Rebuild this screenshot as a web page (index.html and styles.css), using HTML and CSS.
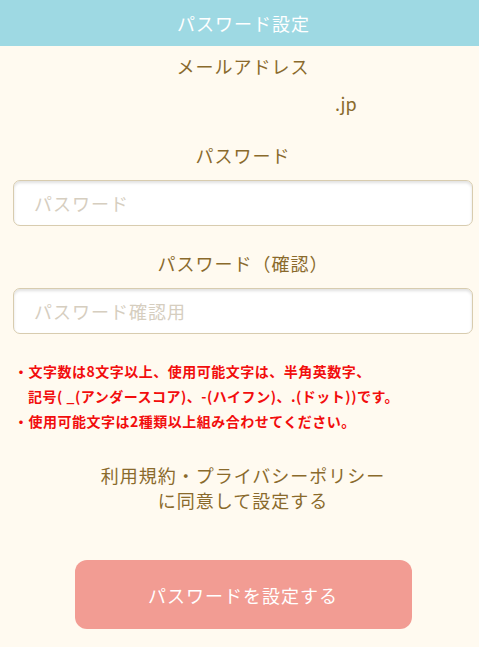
FILE: index.html
```html
<!DOCTYPE html>
<html lang="ja">

<head>
  <meta charset="UTF-8" />
  <title>パスワード設定</title>
  <link rel="stylesheet" href="styles.css">
</head>

<body>
  <div class="page">
    <div class="top-bar">
      <h1>パスワード設定</h1>
    </div>

    <div class="container">
      <p class="label label-mail">メールアドレス</p>
      <p class="mail">.jp</p>

      <p class="label label-pass">パスワード</p>
      <input type="password" class="field" placeholder="パスワード" />

      <p class="label label-confirm">パスワード（確認）</p>
      <input type="password" class="field" placeholder="パスワード確認用" />

      <ul class="notes">
        <li>・文字数は8文字以上、使用可能文字は、半角英数字、<br>記号( _(アンダースコア)、-(ハイフン)、.(ドット))です。</li>
        <li>・使用可能文字は2種類以上組み合わせてください。</li>
      </ul>

      <p class="terms">利用規約・プライバシーポリシー<br>に同意して設定する</p>

      <button type="submit" class="submit-btn">パスワードを設定する</button>
    </div>
  </div>
</body>

</html>
```

FILE: styles.css
```css
:root {
  --header-bg: #9ed9e3;
  --page-bg: #fffaf0;
  --text-color: #8a6a2c;
  --border-color: #d8ccaf;
  --accent: #f29c93;
}

* {
  margin: 0;
  padding: 0;
  box-sizing: border-box;
}

html {
  background-color: #ffffff;
}

body {
  font-family: "Noto Sans CJK JP", "Noto Sans", sans-serif;
  color: var(--text-color);
}

.page {
  width: 479px;
  min-height: 647px;
  background-color: var(--page-bg);
}

.top-bar {
  height: 46px;
  background-color: var(--header-bg);
  padding-left: 8px;
  display: flex;
  align-items: center;
  justify-content: center;
}

.top-bar h1 {
  font-size: 18px;
  font-weight: normal;
  letter-spacing: 1px;
  color: #ffffff;
}

.container {
  padding: 0 0 0 7px;
  display: flex;
  flex-direction: column;
}

.label {
  font-size: 18px;
  line-height: 24px;
  letter-spacing: 1px;
  text-align: center;
}

.label-mail {
  margin-top: 8px;
}

.mail {
  font-size: 18px;
  line-height: 24px;
  padding-left: 328px;
  margin-top: 13px;
}

.label-pass {
  margin-top: 28px;
}

.label-confirm {
  margin-top: 25px;
}

.field {
  margin: 13px 6px 0;
  height: 46px;
  padding: 0 20px;
  font-family: inherit;
  font-size: 18px;
  letter-spacing: 1px;
  color: var(--text-color);
  background-color: #ffffff;
  border: 1px solid var(--border-color);
  border-radius: 7px;
  box-shadow: inset 0 2px 3px rgba(0, 0, 0, 0.12);
  outline: none;
}

.field::placeholder {
  color: #d6cebf;
}

.notes {
  list-style: none;
  margin-top: 25px;
  padding-left: 7px;
  font-size: 14px;
  line-height: 25px;
  font-weight: bold;
  letter-spacing: 0.5px;
  color: #f20d0d;
  white-space: nowrap;
}

.notes li {
  padding-left: 14px;
  text-indent: -14px;
}

.terms {
  margin-top: 29px;
  font-size: 18px;
  line-height: 25px;
  letter-spacing: 1px;
  text-align: center;
}

.submit-btn {
  align-self: center;
  margin: 47px 0 18px;
  width: 337px;
  height: 69px;
  border: none;
  border-radius: 12px;
  background-color: var(--accent);
  color: #ffffff;
  font-family: inherit;
  font-size: 18px;
  letter-spacing: 1px;
  cursor: pointer;
}
```
